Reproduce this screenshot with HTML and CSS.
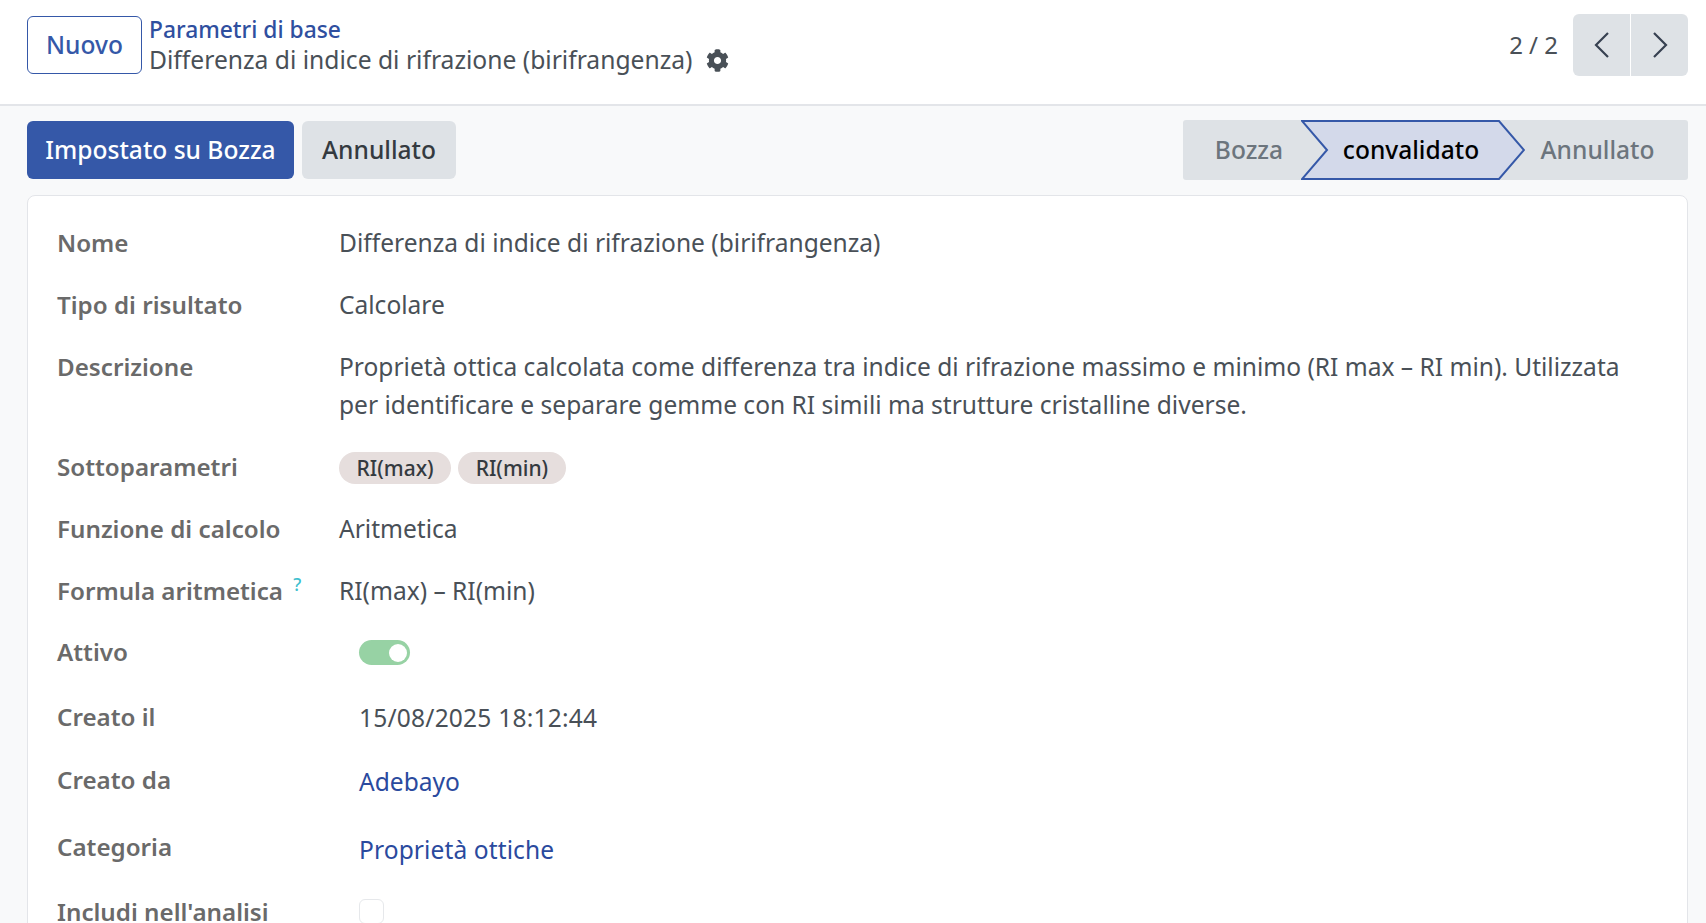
FILE: index.html
```html
<!DOCTYPE html>
<html lang="it">
<head>
<meta charset="utf-8">
<title>Parametri di base</title>
<link rel="stylesheet" href="styles.css">
</head>
<body>
<header class="topbar">
  <button class="btn-new">Nuovo</button>
  <div class="crumbs">
    <a class="crumb-link">Parametri di base</a>
    <div class="crumb-current">
      <span>Differenza di indice di rifrazione (birifrangenza)</span>
      <svg class="gear" viewBox="0 0 512 512"><path d="M487.4 315.7l-42.6-24.6c4.3-23.2 4.3-47 0-70.2l42.6-24.6c4.9-2.8 7.1-8.6 5.5-14-11.1-35.6-30-67.8-54.7-94.6-3.8-4.1-10-5.1-14.8-2.3L380.8 110c-17.9-15.4-38.5-27.3-60.8-35.1V25.8c0-5.6-3.9-10.5-9.4-11.7-36.7-8.2-74.3-7.8-109.2 0-5.5 1.2-9.4 6.1-9.4 11.7V75c-22.2 7.9-42.8 19.8-60.8 35.1L88.7 85.5c-4.9-2.8-11-1.9-14.8 2.3-24.7 26.7-43.6 58.9-54.7 94.6-1.7 5.4.6 11.2 5.5 14L67.3 221c-4.3 23.2-4.3 47 0 70.2l-42.6 24.6c-4.9 2.8-7.1 8.6-5.5 14 11.1 35.6 30 67.8 54.7 94.6 3.8 4.1 10 5.1 14.8 2.3l42.6-24.6c17.9 15.4 38.5 27.3 60.8 35.1v49.2c0 5.6 3.9 10.5 9.4 11.7 36.7 8.2 74.3 7.8 109.2 0 5.5-1.2 9.4-6.1 9.4-11.7v-49.2c22.2-7.9 42.8-19.8 60.8-35.1l42.6 24.6c4.9 2.8 11 1.9 14.8-2.3 24.7-26.7 43.6-58.9 54.7-94.6 1.5-5.5-.7-11.3-5.6-14.1zM256 336c-44.1 0-80-35.9-80-80s35.9-80 80-80 80 35.9 80 80-35.9 80-80 80z"/></svg>
    </div>
  </div>
  <div class="pager">
    <span class="pager-count">2 / 2</span>
    <div class="pager-btns">
      <button class="pager-btn"><svg viewBox="0 0 20 30"><path d="M16 3 L4 15 L16 27"/></svg></button>
      <button class="pager-btn"><svg viewBox="0 0 20 30"><path d="M4 3 L16 15 L4 27"/></svg></button>
    </div>
  </div>
</header>
<main class="content">
  <div class="actionbar">
    <div class="actions">
      <button class="btn btn-primary">Impostato su Bozza</button>
      <button class="btn btn-secondary">Annullato</button>
    </div>
    <div class="status">
      <span class="step step-first">Bozza</span>
      <span class="step step-current">
        <svg class="step-shape" viewBox="0 0 224 60" preserveAspectRatio="none"><path d="M1 1 H198 L223 30 L198 59 H1 L26 30 Z"/></svg>
        <span class="step-label">convalidato</span>
      </span>
      <span class="step step-last">Annullato</span>
    </div>
  </div>
  <section class="sheet">
    <div class="group">
      <div class="row"><div class="label">Nome</div><div class="value">Differenza di indice di rifrazione (birifrangenza)</div></div>
      <div class="row"><div class="label">Tipo di risultato</div><div class="value">Calcolare</div></div>
      <div class="row"><div class="label">Descrizione</div><div class="value">Proprietà ottica calcolata come differenza tra indice di rifrazione massimo e minimo (RI max – RI min). Utilizzata per identificare e separare gemme con RI simili ma strutture cristalline diverse.</div></div>
      <div class="row"><div class="label">Sottoparametri</div><div class="value tags"><span class="tag">RI(max)</span><span class="tag">RI(min)</span></div></div>
      <div class="row"><div class="label">Funzione di calcolo</div><div class="value">Aritmetica</div></div>
      <div class="row row-formula"><div class="label">Formula aritmetica <sup class="help">?</sup></div><div class="value">RI(max) – RI(min)</div></div>
    </div>
    <div class="group group-inset">
      <div class="row row-attivo"><div class="label">Attivo</div><div class="value"><span class="toggle"><span class="knob"></span></span></div></div>
      <div class="row row-date"><div class="label">Creato il</div><div class="value value-date">15/08/2025 18:12:44</div></div>
      <div class="row row-user"><div class="label">Creato da</div><div class="value value-low link">Adebayo</div></div>
      <div class="row row-cat"><div class="label">Categoria</div><div class="value value-lower link">Proprietà ottiche</div></div>
      <div class="row"><div class="label">Includi nell'analisi</div><div class="value"><span class="checkbox"></span></div></div>
    </div>
  </section>
</main>
</body>
</html>
```
FILE: styles.css
```css
* { box-sizing: border-box; }
html, body { margin: 0; height: 923px; overflow: hidden; }
body {
  background: #f8f9fa;
  font-family: "Noto Sans", "Open Sans", sans-serif;
  font-size: 24.55px;
  line-height: 38px;
  color: #495057;
}
button { font: inherit; cursor: pointer; }

.topbar {
  height: 106px;
  background: #fff;
  border-bottom: 2px solid #e3e5e9;
  display: flex;
  align-items: flex-start;
  padding: 14px 18px 0 27px;
}
.btn-new {
  width: 115px;
  height: 58px;
  margin-top: 2px;
  background: #fff;
  border: 1px solid #3558a8;
  border-radius: 6px;
  color: #3558a8;
  font-weight: 500;
  padding: 0;
}
.crumbs { margin: 1px 0 0 7px; display: flex; flex-direction: column; }
.crumb-link { color: #2f4f9f; line-height: 30px; font-weight: 500; font-size: 22.8px; }
.crumb-current { display: flex; align-items: center; gap: 13px; line-height: 30px; font-size: 24.65px; }
.gear { width: 23px; height: 23px; fill: #495057; }

.pager { margin-left: auto; display: flex; align-items: center; gap: 15px; height: 62px; }
.pager-count { color: #495057; font-size: 24px; }
.pager-btns { display: flex; gap: 1px; }
.pager-btn {
  width: 57px;
  height: 62px;
  background: #dee2e6;
  border: 0;
  padding: 0;
  display: flex;
  align-items: center;
  justify-content: center;
}
.pager-btn:first-child { border-radius: 6px 0 0 6px; }
.pager-btn:last-child { border-radius: 0 6px 6px 0; }
.pager-btn svg { width: 20px; height: 30px; fill: none; stroke: #374151; stroke-width: 2.2; }

.content { padding: 14px 18px 0 27px; }
.actionbar { display: flex; justify-content: space-between; align-items: flex-start; }
.actions { display: flex; gap: 8px; padding-top: 1px; }
.btn { height: 58px; border: 0; border-radius: 6px; padding: 0; font-weight: 500; }
.btn-primary { width: 267px; background: #3558a8; color: #fff; }
.btn-secondary { width: 154px; background: #dee2e6; color: #343a40; }

.status {
  display: flex;
  width: 505px;
  height: 60px;
  background: #dee2e6;
  border-radius: 3px;
  font-weight: 500;
  color: #6c757d;
}
.step { display: flex; align-items: center; justify-content: center; height: 60px; }
.step-first { width: 118px; padding-left: 14px; }
.step-current { position: relative; width: 198px; color: #000; padding-left: 22px; }
.step-shape { position: absolute; left: 0; top: 0; width: 224px; height: 60px; }
.step-shape path { fill: #d3d9ea; stroke: #3558a8; stroke-width: 2; }
.step-label { position: relative; }
.step-last { flex: 1; padding-left: 8px; }

.sheet {
  margin-top: 15px;
  height: 760px;
  background: #fff;
  border: 1px solid #e3e5e9;
  border-radius: 8px;
  padding: 28px 28px 0 29px;
}
.row { display: grid; grid-template-columns: 282px 1fr; margin-bottom: 24px; }
.label { color: #6a6a6a; font-weight: 600; font-size: 24.2px; }
.row-formula { margin-bottom: 23px; }
.group-inset .row { grid-template-columns: 302px 1fr; }
.help { color: #3fbfcf; font-size: 18px; font-weight: 500; line-height: 0; margin-left: 4px; vertical-align: 9px; }
.tags { display: flex; gap: 7px; align-items: center; padding-top: 2px; }
.tag {
  height: 32px;
  line-height: 32px;
  padding: 0 17.5px;
  border-radius: 16px;
  background: #e6dedd;
  color: #343a40;
  font-size: 21px;
  font-weight: 500;
}
.link { color: #2a4a9e; }
.value-date { padding-top: 1px; letter-spacing: 0.2px; }
.value-low { padding-top: 2px; }
.value-lower { padding-top: 3px; letter-spacing: 0.1px; }
.toggle {
  display: flex;
  justify-content: flex-end;
  align-items: center;
  width: 51px;
  height: 25px;
  margin-top: 7px;
  padding-right: 3px;
  background: #97d2a4;
  border-radius: 13px;
}
.knob { width: 18px; height: 18px; border-radius: 50%; background: #fff; }
.row-attivo { margin-bottom: 27px; }
.row-date { margin-bottom: 24px; }
.row-user { margin-bottom: 27px; }
.row-cat { margin-bottom: 24px; }
.checkbox {
  display: block;
  width: 25px;
  height: 25px;
  margin-top: 6px;
  border: 1px solid #e6e8eb;
  border-radius: 6px;
  background: #fff;
}
```
